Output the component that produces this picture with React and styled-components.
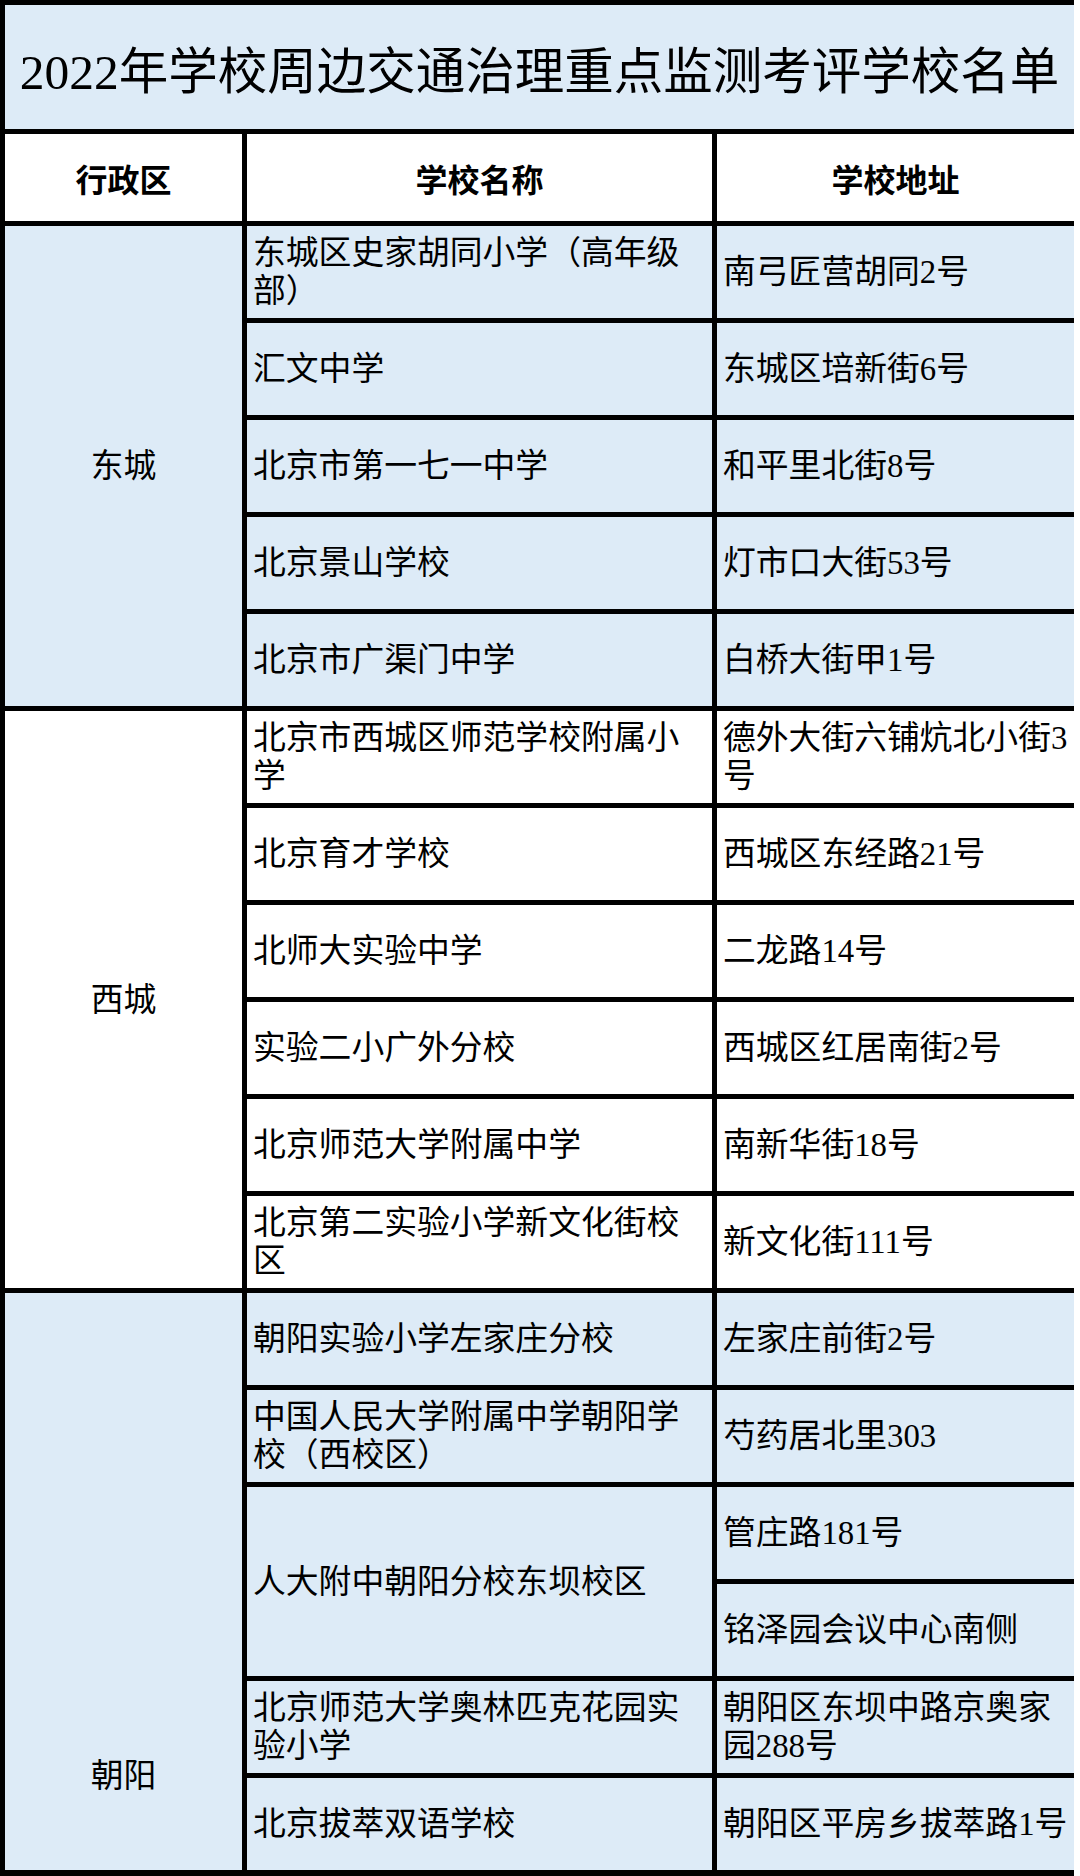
import React from 'react'
import styled, { createGlobalStyle } from 'styled-components'

const ROW = 92
const LINE = 5

const GlobalStyle = createGlobalStyle`
    html, body {
        margin: 0;
        padding: 0;
        background: #ffffff;
    }
`

// sheet grid, the black background shows through the gaps as cell borders
const Sheet = styled.div`
    width: 1074px;
    box-sizing: border-box;
    display: grid;
    grid-template-columns: 237px 465px 357px;
    grid-template-rows: 124px 87px repeat(17, ${ROW}px);
    gap: ${LINE}px;
    padding: 5px 0 6px 5px;
    background: #000000;
    font-family: "Liberation Serif", "Noto Sans CJK SC", serif;
    color: #000000;
`

const Title = styled.div`
    grid-column: 1 / -1;
    display: flex;
    align-items: center;
    justify-content: center;
    background: #ddebf7;
    font-size: 49.5px;
    white-space: nowrap;
`

const HeadCell = styled.div`
    display: flex;
    align-items: center;
    justify-content: center;
    background: #ffffff;
    font-size: 32px;
    font-weight: 600;
`

const Cell = styled.div`
    grid-column: ${p => p.$col};
    grid-row: span ${p => p.$span || 1};
    display: flex;
    align-items: center;
    box-sizing: border-box;
    padding: 0 2px 0 6px;
    background: ${p => (p.$tone === 'blue' ? '#ddebf7' : '#ffffff')};
    font-size: 32.8px;
    line-height: 38px;
    overflow: hidden;
`

// merged district cell, label sits in the middle of the whole merge even when it runs past the cut
const DistrictCell = styled(Cell)`
    justify-content: center;
    padding: ${p => p.$hidden * (ROW + LINE)}px 0 0 0;
`

const groups = [
    {
        district: '东城',
        tone: 'blue',
        schools: [
            { name: '东城区史家胡同小学（高年级部）', addrs: ['南弓匠营胡同2号'] },
            { name: '汇文中学', addrs: ['东城区培新街6号'] },
            { name: '北京市第一七一中学', addrs: ['和平里北街8号'] },
            { name: '北京景山学校', addrs: ['灯市口大街53号'] },
            { name: '北京市广渠门中学', addrs: ['白桥大街甲1号'] },
        ],
    },
    {
        district: '西城',
        tone: 'white',
        schools: [
            { name: '北京市西城区师范学校附属小学', addrs: ['德外大街六铺炕北小街3号'] },
            { name: '北京育才学校', addrs: ['西城区东经路21号'] },
            { name: '北师大实验中学', addrs: ['二龙路14号'] },
            { name: '实验二小广外分校', addrs: ['西城区红居南街2号'] },
            { name: '北京师范大学附属中学', addrs: ['南新华街18号'] },
            { name: '北京第二实验小学新文化街校区', addrs: ['新文化街111号'] },
        ],
    },
    {
        district: '朝阳',
        tone: 'blue',
        hidden: 4,
        schools: [
            { name: '朝阳实验小学左家庄分校', addrs: ['左家庄前街2号'] },
            { name: '中国人民大学附属中学朝阳学校（西校区）', addrs: ['芍药居北里303'] },
            { name: '人大附中朝阳分校东坝校区', addrs: ['管庄路181号', '铭泽园会议中心南侧'] },
            { name: '北京师范大学奥林匹克花园实验小学', addrs: ['朝阳区东坝中路京奥家园288号'] },
            { name: '北京拔萃双语学校', addrs: ['朝阳区平房乡拔萃路1号'] },
        ],
    },
]

export default function App() {
    return (
        <>
            <GlobalStyle />
            <Sheet>
                <Title>2022年学校周边交通治理重点监测考评学校名单</Title>
                <HeadCell>行政区</HeadCell>
                <HeadCell>学校名称</HeadCell>
                <HeadCell>学校地址</HeadCell>

                {groups.map((g) => {
                    const span = g.schools.reduce((n, s) => n + s.addrs.length, 0)
                    return (
                        <React.Fragment key={g.district}>
                            <DistrictCell $col={1} $span={span} $tone={g.tone} $hidden={g.hidden || 0}>
                                {g.district}
                            </DistrictCell>
                            {g.schools.map((s) => (
                                <React.Fragment key={s.name}>
                                    <Cell $col={2} $span={s.addrs.length} $tone={g.tone}>
                                        {s.name}
                                    </Cell>
                                    {s.addrs.map((a) => (
                                        <Cell key={a} $col={3} $tone={g.tone}>
                                            {a}
                                        </Cell>
                                    ))}
                                </React.Fragment>
                            ))}
                        </React.Fragment>
                    )
                })}
            </Sheet>
        </>
    )
}
